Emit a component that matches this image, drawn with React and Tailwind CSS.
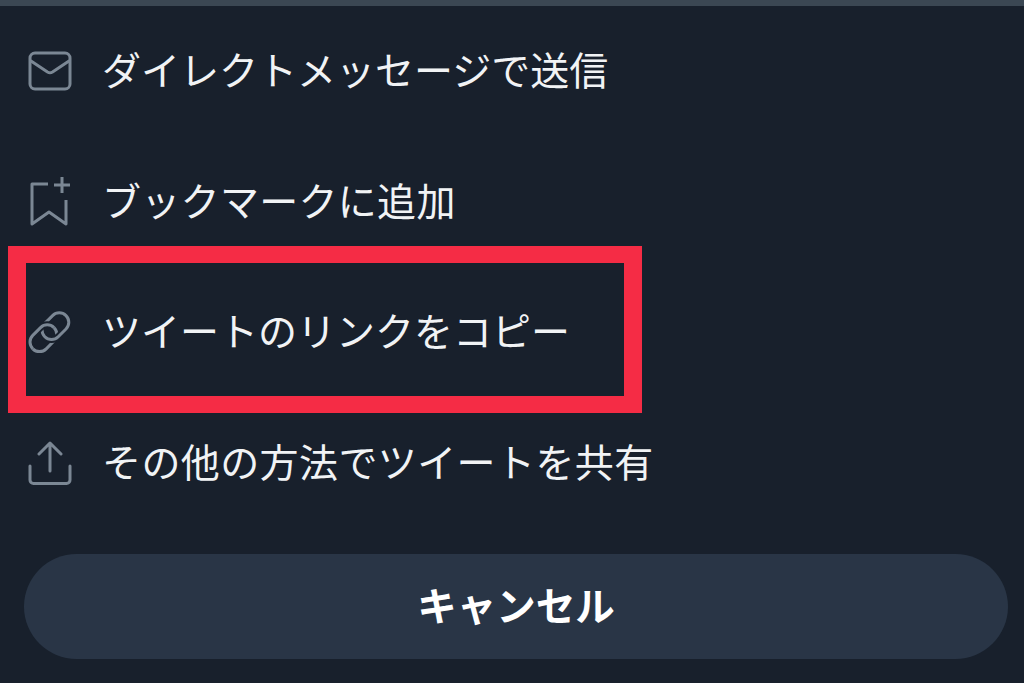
const font = { fontFamily: '"Noto Sans CJK JP", sans-serif' };

function MailIcon() {
  return (
    <svg width="44" height="40" viewBox="0 0 44 40" fill="none" stroke="#7b8794" strokeWidth="3" strokeLinecap="round" strokeLinejoin="round">
      <rect x="2" y="2" width="40" height="36" rx="5" />
      <path d="M3 10l16.500 11c1.600 1 3.400 1 5 0L41 10" />
    </svg>
  );
}

function BookmarkPlusIcon() {
  return (
    <svg width="46" height="50" viewBox="0 0 46 50" fill="none" stroke="#7b8794" strokeWidth="3" strokeLinejoin="round">
      <path d="M20 7H4v40l17-12 17 12V23" />
      <path d="M34 0v16M26 8h16" />
    </svg>
  );
}

function LinkIcon() {
  return (
    <svg width="44" height="44" viewBox="0 0 44 44" fill="none" stroke="#7b8794" strokeWidth="3">
      <defs>
        <clipPath id="link-top"><rect x="-30" y="0" width="60" height="30" /></clipPath>
        <clipPath id="link-bottom"><rect x="-30" y="-30" width="60" height="30" /></clipPath>
      </defs>
      <g transform="translate(21.400 22.200) rotate(-45)">
        <rect x="-23.500" y="-9.500" width="30" height="19" rx="9.500" />
        <g clipPath="url(#link-top)">
          <rect x="-6.500" y="-9.500" width="30" height="19" rx="9.500" stroke="#18202c" strokeWidth="7" />
        </g>
        <rect x="-6.500" y="-9.500" width="30" height="19" rx="9.500" />
        <g clipPath="url(#link-bottom)">
          <rect x="-23.500" y="-9.500" width="30" height="19" rx="9.500" stroke="#18202c" strokeWidth="7" />
          <rect x="-23.500" y="-9.500" width="30" height="19" rx="9.500" />
        </g>
      </g>
    </svg>
  );
}

function ShareIcon() {
  return (
    <svg width="44" height="44" viewBox="0 0 44 44" fill="none" stroke="#7b8794" strokeWidth="3" strokeLinecap="round" strokeLinejoin="round">
      <path d="M22 30V3M11 13L22 2l11 11" />
      <path d="M2 25v14a3.500 3.500 0 0 0 3.500 3.500h33A3.500 3.500 0 0 0 42 39V25" />
    </svg>
  );
}

const rows = [
  { label: "ダイレクトメッセージで送信", icon: <MailIcon />, text: "" },
  { label: "ブックマークに追加", icon: <BookmarkPlusIcon />, text: "tracking-[0.3px]" },
  { label: "ツイートのリンクをコピー", icon: <LinkIcon />, text: "" },
  { label: "その他の方法でツイートを共有", icon: <ShareIcon />, text: "tracking-[0.4px]" },
];

export default function App() {
  return (
    <div className="relative w-[1024px] h-[683px] overflow-hidden bg-[#18202c] border-t-[6px] border-[#3b4753]" style={font}>
      <div className="flex flex-col">
        {rows.map((row) => (
          <div key={row.label} className="flex items-center h-[130.500px] pl-[28px]">
            <div className="w-[74px] flex items-center">{row.icon}</div>
            <span className={`text-[39px] leading-none pb-[5px] text-[#f1f3f5] ${row.text}`}>{row.label}</span>
          </div>
        ))}
      </div>

      <div className="ml-[24px] mr-[16px] mt-[26px] h-[105px] rounded-full bg-[#293546] flex items-center justify-center">
        <span className="text-[39.500px] leading-none pb-[6px] font-bold text-white">キャンセル</span>
      </div>

      {/* 赤枠 */}
      <div className="absolute left-[8px] top-[240px] w-[634px] h-[167px] border-y-[17px] border-x-[18px] border-[#f52c45]" />
    </div>
  );
}
